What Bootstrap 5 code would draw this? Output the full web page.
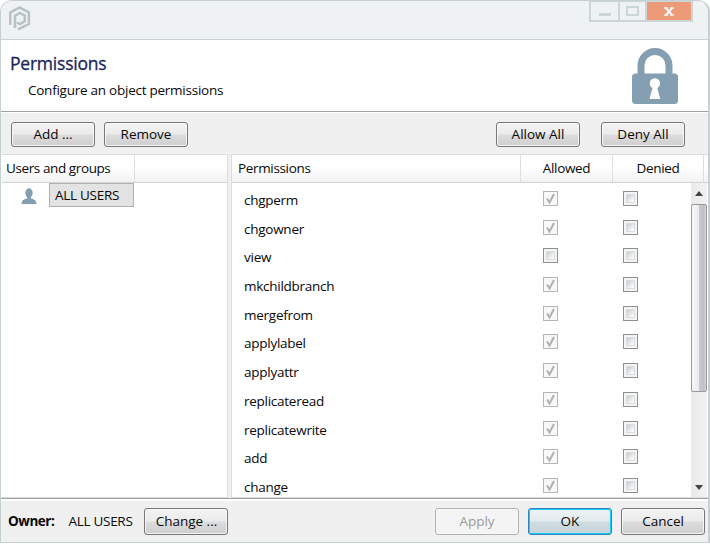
<!DOCTYPE html>
<html lang="en">
<head>
<meta charset="utf-8">
<title>Permissions</title>
<meta name="viewport" content="width=device-width, initial-scale=1">
<link href="https://cdn.jsdelivr.net/npm/bootstrap@5.3.0/dist/css/bootstrap.min.css" rel="stylesheet">
<style>
html,body{height:100%}
body{font-family:"Open Sans","Noto Sans",sans-serif;font-size:13.5px;letter-spacing:-.34px;line-height:18px;color:#080808;background:#fff;overflow:hidden}
.win{width:710px;height:543px;background:#f0f0f0;border:1px solid #c5d1d1;border-right-width:2px;border-radius:12px 12px 0 0;overflow:hidden}
.titlebar{height:39px;background:#eef2f3;border-bottom:1px solid #c9d4d4;padding-left:8px}
.logo{margin-top:4px}
.winctl{height:21px;margin-right:15px;border:2px solid #cbd7d7;border-top-width:1px}
.winctl span{display:flex;justify-content:center;align-items:center;border-right:2px solid #cbd7d7}
.winctl .cls{width:44px;background:#ed9a78;border:0}
.head{height:72px;background:#fff;border-bottom:1px solid #a0a0a0;padding:13px 30px 0 9px}
.head h1{font-size:17.5px;line-height:20px;letter-spacing:-.22px;color:#1b2559;font-weight:400;-webkit-text-stroke:.3px #1b2559}
.head p{margin:8px 0 0 18px;letter-spacing:-.25px}
.tools{height:42px;padding:9px 23px 0 10px;border-top:1px solid #fff}
.wbtn{--bs-btn-padding-x:0;--bs-btn-padding-y:0;--bs-btn-font-size:13.5px;--bs-btn-line-height:18px;--bs-btn-border-radius:3px;--bs-btn-color:#080808;--bs-btn-border-color:#777;width:84px;height:25px;padding-bottom:2px;background:linear-gradient(#f3f3f3,#ebebeb 48%,#dcdcdc 52%,#cfcfcf);box-shadow:inset 0 0 0 1px #fbfbfbcc}
.foot .wbtn{height:27px}
.wbtn.off{color:#9a9a9a;border-color:#adb2b5;background:#f4f4f4}
.wbtn.dflt{border-color:#2f85b5;background:linear-gradient(#eef3f4,#e3ebee 48%,#cfdce0 52%,#c5d3d8);box-shadow:inset 0 0 0 1px #18cbf8}
.panes{height:344px;gap:3px}
.pane{background:#fff;border:1px solid #dcdcdc;overflow:hidden}
.users{width:227px;border-left-color:#fff}
.perms{flex:1;border-right:0}
.th-row{height:28px;background:linear-gradient(#fff 45%,#f2f2f2);border-bottom:1px solid #d5d5d5}
.th-row>div{border-right:1px solid #dedede;padding-top:4px}
.chosen{border:1px solid #b0b0b0;background:#e3e3e3;width:85px;height:24px;padding:2px 0 0 5px;letter-spacing:-.28px}
.prow{height:28.7px}
.prow .nm{width:311px;padding:4px 0 0 12px;letter-spacing:-.26px}
.cb{width:15px;height:15px;border:1px solid #8e8f8f;background:linear-gradient(135deg,#c3cad0,#e4e8eb 50%,#fafafa 85%) 3px 3px/7px 7px no-repeat,#d9dbdc;box-shadow:inset 0 0 0 2px #f4f4f4}
.cb.on{border-color:#b5b5b5;background:#f8f8f8;box-shadow:none}
.cb svg{display:block}
.sbar{width:16px;background:linear-gradient(90deg,#eaeaea,#f2f2f2)}
.thumb{height:188px;margin-top:8px;border:1px solid #989898;border-radius:2px;background:linear-gradient(90deg,#f7f7f7,#ececef 48%,#c9c9ce 52%,#bfc0c5 85%,#d8d8dc)}
.foot{height:45px;border-top:1px solid #a0a0a0;padding:9px 3px 0 7px;box-shadow:inset 0 2px #fff}
.foot b{letter-spacing:-.45px}
</style>
</head>
<body>
<div class="win d-flex flex-column">
  <div class="titlebar d-flex justify-content-between align-items-start flex-shrink-0">
    <svg class="logo" width="23" height="26" viewBox="0 0 23 26" fill="none" stroke="#b7c2c6" stroke-width="2.500"><path d="M1.200 20V7.400L10.700 2.300l9.200 5.100V19L9 24.300"/><path d="M6 23V10.700l4.900-2.800 4.900 2.800v5.600l-4.900 2.800L8 17.500"/></svg>
    <div class="winctl d-flex"><span style="width:29px"><svg width="12" height="12"><path d="M0 8h12v3H0z" fill="#cbd7d7"/></svg></span><span style="width:27px"><svg width="13" height="11"><path d="M1 1h11v8H1z" fill="none" stroke="#cbd7d7" stroke-width="2"/></svg></span><span class="cls"><svg width="10" height="9" viewBox="0 0 10 9"><path d="M2 1l6 7M8 1L2 8" stroke="#f1f3f3" stroke-width="2.300"/><path d="M0 1h4M6 1h4M0 8h4M6 8h4" stroke="#f1f3f3" stroke-width="1.500"/></svg></span></div>
  </div>
  <div class="head d-flex justify-content-between flex-shrink-0">
    <div><h1 class="mb-0">Permissions</h1><p>Configure an object permissions</p></div>
    <svg width="46" height="57" viewBox="0 0 46 57" style="margin-top:-5px"><path d="M9 28V17.500a14 14 0 0 1 28 0V28" fill="none" stroke="#859fb2" stroke-width="7"/><rect y="25.500" width="46" height="30.500" rx="3.500" fill="#859fb2"/><path d="M20.500 40a5.200 5.200 0 1 1 4.800 0l3 11H17.500z" fill="#fff"/></svg>
  </div>
  <div class="tools d-flex flex-shrink-0">
    <button class="btn wbtn">Add ...</button><button class="btn wbtn" style="margin-left:9px">Remove</button>
    <button class="btn wbtn ms-auto">Allow All</button><button class="btn wbtn" style="margin-left:21px">Deny All</button>
  </div>
  <div class="panes d-flex flex-shrink-0">
    <div class="pane users">
      <div class="th-row d-flex"><div style="width:133px;padding-left:4px;letter-spacing:-.4px">Users and groups</div></div>
      <div class="d-flex"><svg width="16" height="17" viewBox="0 0 16 17" style="margin:5px 12px 0 19px"><ellipse cx="8" cy="5" rx="3.700" ry="4.700" fill="#859fb2"/><path d="M6 8h4v2.500q5.500.8 5.500 5.500H.5q0-4.700 5.500-5.500z" fill="#859fb2"/></svg><div class="chosen">ALL USERS</div></div>
    </div>
    <div class="pane perms d-flex flex-column">
      <div class="th-row d-flex flex-shrink-0"><div style="width:289px;padding-left:6px">Permissions</div><div class="text-center" style="width:92px">Allowed</div><div class="text-center" style="width:91px">Denied</div></div>
      <div class="d-flex flex-fill overflow-hidden">
        <div id="rows" style="width:459px;padding-top:4px"></div>
        <div class="sbar d-flex flex-column align-items-center">
          <svg class="flex-shrink-0" width="8" height="5" style="margin-top:8px"><path d="M0 5l4-5 4 5z" fill="#444"/></svg>
          <div class="thumb w-100 flex-shrink-0"></div>
          <svg class="mt-auto flex-shrink-0" width="8" height="5" style="margin-bottom:7px"><path d="M0 0h8L4 5z" fill="#444"/></svg>
        </div>
      </div>
    </div>
  </div>
  <div class="foot d-flex align-items-start flex-fill">
    <b class="mt-1">Owner:</b><span class="mt-1" style="width:76px;margin-left:14px;letter-spacing:-.28px">ALL USERS</span><button class="btn wbtn">Change ...</button>
    <button class="btn wbtn off ms-auto">Apply</button><button class="btn wbtn dflt" style="margin:0 9px">OK</button><button class="btn wbtn">Cancel</button>
  </div>
</div>
<script src="https://cdn.jsdelivr.net/npm/bootstrap@5.3.0/dist/js/bootstrap.bundle.min.js"></script>
<script>
const names=["chgperm","chgowner","view","mkchildbranch","mergefrom","applylabel","applyattr","replicateread","replicatewrite","add","change"];
const tick='<svg width="13" height="13" viewBox="0 0 13 13"><path d="M3 6.500l2.500 4L10 2" fill="none" stroke="#b0b0b0" stroke-width="2"/></svg>';
document.getElementById("rows").innerHTML=names.map(n=>`<div class="prow d-flex"><div class="nm">${n}</div><div class="cb mt-1 ${n==="view"?"":"on"}">${n==="view"?"":tick}</div><div class="cb mt-1" style="margin-left:65px"></div></div>`).join("");
</script>
</body>
</html>
